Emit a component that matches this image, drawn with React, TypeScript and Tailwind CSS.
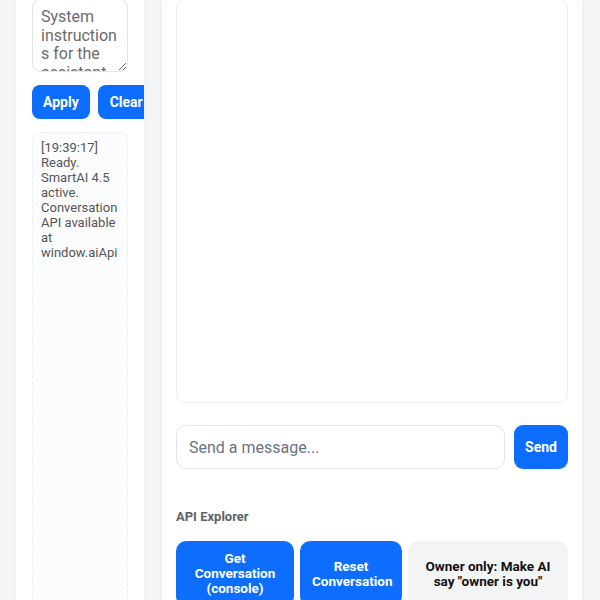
import React from "react";

const LOG_TEXT =
  "[19:39:17] Ready. SmartAI 4.5 active. Conversation API available at window.aiApi";

const API_ACTIONS = [
  { label: "Get Conversation (console)", width: "w-[118px]", primary: true },
  { label: "Reset Conversation", width: "w-[102px]", primary: true },
  { label: 'Owner only: Make AI say "owner is you"', width: "flex-1", primary: false },
];

const App = () => {
  return (
    <div
      className="flex h-[600px] w-[600px] overflow-hidden bg-[#f3f4f6] pl-4"
      style={{ fontFamily: "Roboto, 'Liberation Sans', sans-serif" }}
    >
      {/* Sidebar */}
      <aside className="flex w-[128px] shrink-0 flex-col overflow-hidden bg-white px-4 shadow-[0_1px_3px_rgba(0,0,0,0.04)]">
        <textarea
          placeholder="System instructions for the assistant"
          className="-mt-px h-[73px] w-full shrink-0 rounded-lg border border-[#e3e5e9] px-2 py-2 text-base leading-[18.5px] text-[#333] outline-none placeholder:text-[#6b6b6b]"
        />

        <div className="mt-[13px] flex gap-2">
          <button className="h-[34px] shrink-0 rounded-lg bg-[#0d6efd] px-[11px] text-sm font-bold text-white">
            Apply
          </button>
          <button className="h-[34px] shrink-0 rounded-lg bg-[#0d6efd] px-3 text-sm font-bold text-white">
            Clear
          </button>
        </div>

        <div className="mt-[13px] h-[520px] shrink-0 rounded-lg border border-dashed border-[#e9edf2] bg-[#fbfcfe] px-2 py-[7px] text-[13px] leading-[15px] text-[#555]">
          {LOG_TEXT}
        </div>
      </aside>

      {/* Main chat panel */}
      <main className="ml-[18px] flex w-[420px] shrink-0 flex-col bg-white px-[14px] shadow-[0_1px_3px_rgba(0,0,0,0.04)]">
        <div className="-mt-px h-[404px] shrink-0 rounded-lg border border-[#eceef1] bg-white" />

        <div className="mt-[22px] flex gap-[9px]">
          <input
            placeholder="Send a message..."
            className="h-[44px] min-w-0 flex-1 rounded-[10px] border border-[#e3e5e9] px-3 text-base text-[#333] outline-none placeholder:text-[#6b7280]"
          />
          <button className="h-[44px] w-[54px] shrink-0 rounded-[9px] bg-[#0d6efd] text-sm font-bold text-white">
            Send
          </button>
        </div>

        <div className="mt-[40px] text-[13px] font-bold leading-[15px] text-[#5f6368]">
          API Explorer
        </div>

        <div className="mt-[17px] flex gap-[6px]">
          {API_ACTIONS.map((action) => (
            <button
              key={action.label}
              className={`${action.width} rounded-[10px] px-3 py-[10px] text-[13.5px] font-bold leading-[15px] ${
                action.primary ? "bg-[#0d6efd] text-white" : "bg-[#f3f4f6] text-[#111]"
              }`}
            >
              {action.label}
            </button>
          ))}
        </div>
      </main>
    </div>
  );
};

export default App;
